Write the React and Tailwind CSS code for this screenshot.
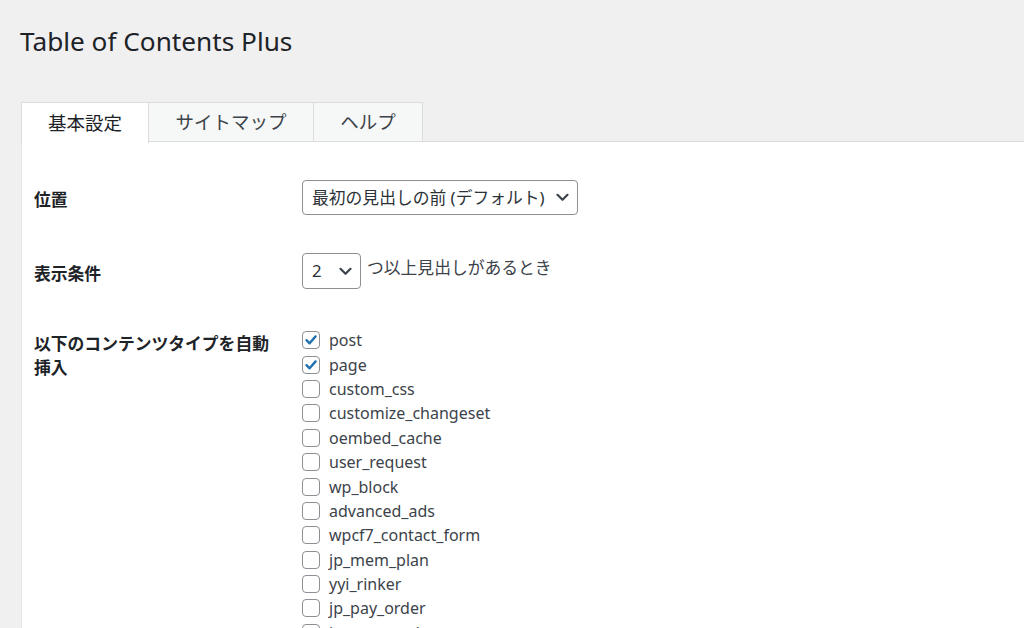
import React from "react";

const font = { fontFamily: '"Noto Sans", "Noto Sans CJK JP", sans-serif' };

const types = [
  ["post", true],
  ["page", true],
  ["custom_css", false],
  ["customize_changeset", false],
  ["oembed_cache", false],
  ["user_request", false],
  ["wp_block", false],
  ["advanced_ads", false],
  ["wpcf7_contact_form", false],
  ["jp_mem_plan", false],
  ["yyi_rinker", false],
  ["jp_pay_order", false],
  ["jp_pay_product", false],
];

function Chevron() {
  return (
    <svg width="13" height="9" viewBox="0 0 13 9" className="shrink-0">
      <path d="M1.5 1.8 L6.5 6.8 L11.5 1.8" fill="none" stroke="#3c434a" strokeWidth="2.2" strokeLinecap="round" strokeLinejoin="round" />
    </svg>
  );
}

function Checkbox({ checked }) {
  return (
    <span className="w-[18px] h-[18px] rounded-[4px] border border-[#8c8f94] bg-white flex items-center justify-center shrink-0">
      {checked && (
        <svg width="14" height="14" viewBox="0 0 14 14">
          <path d="M2.5 7.2 L5.6 10.3 L11.6 3.4" fill="none" stroke="#2271b1" strokeWidth="2.4" strokeLinecap="round" strokeLinejoin="round" />
        </svg>
      )}
    </span>
  );
}

export default function App() {
  return (
    <div className="w-[1024px] h-[628px] overflow-hidden bg-[#f0f0f1] text-[#1d2327]" style={font}>
      <div className="pl-5 pt-[23px] h-[102px]">
        <h1 className="text-[26.2px] leading-[36px] text-[#1d2327] font-normal">Table of Contents Plus</h1>
      </div>
      <div className="pl-[21px]">
        <div className="flex h-[40px] border-b border-[#dcdcde]">
          <div className="h-[41px] -mb-px w-[128px] bg-white border border-b-0 border-[#dcdcde] flex items-center justify-center text-[18.5px] text-[#1d2327]">基本設定</div>
          <div className="h-[40px] w-[165px] bg-[#f6f7f7] border border-l-0 border-[#dcdcde] flex items-center justify-center text-[18.5px] text-[#3c434a]">サイトマップ</div>
          <div className="h-[40px] w-[109px] bg-[#f6f7f7] border border-l-0 border-[#dcdcde] flex items-center justify-center text-[18.5px] text-[#3c434a]">ヘルプ</div>
        </div>
        <div className="bg-white border-l border-[#e6e6e6] h-[486px] pl-[12px] text-[16.8px]">
          {/* Row 1 */}
          <div className="flex pt-[38px]">
            <div className="w-[268px] font-bold pt-[8px] leading-[24px]">位置</div>
            <div className="h-[35px] w-[276px] border border-[#8c8f94] rounded-[4px] flex items-center justify-between pl-[9px] pr-[8px] text-[#2c3338]">
              <span>最初の見出しの前 (デフォルト)</span>
              <Chevron />
            </div>
          </div>
          {/* Row 2 */}
          <div className="flex pt-[38px]">
            <div className="w-[268px] font-bold pt-[9px] leading-[24px]">表示条件</div>
            <div className="h-[36px] w-[59px] border border-[#8c8f94] rounded-[4px] flex items-center justify-between pl-[9px] pr-[8px] text-[#2c3338]">
              <span>2</span>
              <Chevron />
            </div>
            <div className="ml-[6px] leading-[24px] pt-[3px] text-[#3c434a]">つ以上見出しがあるとき</div>
          </div>
          {/* Row 3 */}
          <div className="flex pt-[39px]">
            <div className="w-[240px] mr-[28px] font-bold leading-[24px] pt-[4px]">以下のコンテンツタイプを自動挿入</div>
            <div className="flex flex-col">
              {types.map(([name, checked]) => (
                <label key={name} className="flex items-center h-[24.4px] gap-[9px] text-[#3c434a] text-[16px]">
                  <Checkbox checked={checked} />
                  <span className="leading-[24px]">{name}</span>
                </label>
              ))}
            </div>
          </div>
        </div>
      </div>
    </div>
  );
}
